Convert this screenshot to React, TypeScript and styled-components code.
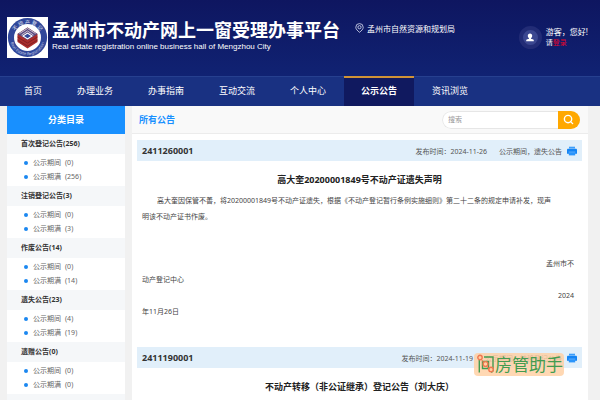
import React from "react";
import styled, { createGlobalStyle } from "styled-components";
import { Search } from "lucide-react";

const GlobalStyle = createGlobalStyle`
  *, *::before, *::after { box-sizing: border-box; }
  html, body { margin: 0; padding: 0; }
  body {
    background: #f1f1f1;
    color: #444;
    font-family: "Noto Sans", "Noto Sans CJK SC", sans-serif;
    font-size: 7px;
  }
  h1, h2, h3, p, ul { margin: 0; padding: 0; }
  ul { list-style: none; }
  a { color: inherit; text-decoration: none; }
  button, input { font-family: inherit; border: 0; padding: 0; }
`;

const Page = styled.div`
  display: flex;
  flex-direction: column;
  min-height: 100vh;
`;

const Header = styled.header`
  background: linear-gradient(#0e1660, #11277a);
  color: #fff;
`;

const Banner = styled.div`
  display: flex;
  height: 76px;
  padding: 17px 12px 0 7px;
`;

const Brand = styled.div`
  padding: 2px 0 0 4px;
`;

const BrandTitle = styled.h1`
  font-size: 18px;
  line-height: 22px;
  font-weight: 700;
  white-space: nowrap;
`;

const BrandSubtitle = styled.p`
  font-family: "Liberation Sans", sans-serif;
  font-size: 8px;
  line-height: 12px;
  white-space: nowrap;
`;

const Office = styled.div`
  display: flex;
  align-items: center;
  gap: 3px;
  height: 12px;
  margin: 5px 0 0 15px;
  font-size: 8px;
  white-space: nowrap;
`;

const Visitor = styled.div`
  display: flex;
  gap: 4px;
  margin: 9px 0 0 auto;
  white-space: nowrap;
`;

const Avatar = styled.span`
  display: grid;
  place-items: center;
  width: 23px;
  height: 23px;
  border: 4px solid #222c76;
  border-radius: 50%;
  background: #3b4790;
`;

const Greeting = styled.div`
  font-size: 8px;
  line-height: 11px;
`;

const LoginLine = styled.div`
  font-size: 7px;
  line-height: 12px;
`;

const LoginLink = styled.a`
  color: #e0062c;
`;

const Nav = styled.nav`
  display: flex;
  gap: 1px;
  height: 30px;
  padding-left: 7px;
  background: #193182;
  border-top: 1px solid #26408f;
`;

const NavLink = styled.a<{ $active?: boolean }>`
  margin-top: -1px;
  padding: 0 17px;
  border-top: 2px solid ${(p) => (p.$active ? "#d09336" : "transparent")};
  background: ${(p) => (p.$active ? "#10195f" : "transparent")};
  font-size: 9px;
  font-weight: ${(p) => (p.$active ? 700 : 400)};
  line-height: 26px;
  white-space: nowrap;
`;

const Body = styled.div`
  display: flex;
  flex: 1;
  gap: 7px;
  padding: 0 12px 0 7px;
`;

const Sidebar = styled.aside`
  display: flex;
  flex-direction: column;
  flex: 0 0 118px;
  background: #fff;
`;

const SidebarTitle = styled.h2`
  background: #1890ff;
  color: #fff;
  font-size: 9px;
  line-height: 28px;
  height: 28px;
  text-align: center;
`;

const GroupTitle = styled.h3`
  background: #f5f7f9;
  color: #333;
  padding-left: 14px;
  font-size: 7px;
  line-height: 20px;
`;

const GroupList = styled.ul`
  padding: 2px 0 2px 17px;
`;

const GroupItem = styled.li`
  display: flex;
  align-items: center;
  height: 14px;
  color: #666;

  &::before {
    content: "";
    width: 4px;
    height: 4px;
    margin-right: 5px;
    border-radius: 50%;
    background: #1b87f0;
  }
`;

const GroupLink = styled.a`
  display: flex;
  gap: 4px;
  line-height: 14px;
`;

const GroupRest = styled.div`
  flex: 1;
  background: #f5f7f9;
`;

const Main = styled.main`
  flex: 1;
  min-width: 0;
  background: #fff;
`;

const MainHead = styled.div`
  display: flex;
  align-items: center;
  justify-content: space-between;
  height: 28px;
  padding: 0 8px 0 7px;
  background: #f9f9f9;
  border-bottom: 1px solid #ececec;
`;

const MainTitle = styled.h2`
  color: #1890ff;
  font-size: 9px;
`;

const SearchBox = styled.form`
  display: flex;
  width: 138px;
  height: 18px;
  border-radius: 9px;
  overflow: hidden;
`;

const SearchInput = styled.input`
  flex: 1;
  min-width: 0;
  padding-left: 5px;
  border: 1px solid #e6e6e6;
  border-right: 0;
  border-radius: 9px 0 0 9px;
  background: #fff;
  font-size: 7px;
  &::placeholder { color: #999; }
`;

const SearchButton = styled.button`
  display: grid;
  place-items: center;
  width: 22px;
  padding-right: 2px;
  background: #ffa800;
  color: #fff;
`;

const Notices = styled.div`
  padding: 6px 6px 0 5px;
`;

const NoticeBar = styled.div`
  display: flex;
  align-items: center;
  height: 21px;
  padding: 0 5px;
  background: #e1effa;
  white-space: nowrap;
`;

const NoticeNumber = styled.strong`
  margin-right: auto;
  color: #333;
  font-size: 9px;
`;

const NoticeMeta = styled.span`
  margin-right: 12px;
  color: #555;
`;

const NoticeKind = styled.span`
  position: relative;
  margin-right: 5px;
  color: #555;
`;

const PrintButton = styled.button`
  display: grid;
  width: 10px;
  height: 10px;
  background: none;
`;

const NoticeTitle = styled.h3`
  margin-top: 10px;
  color: #222;
  font-size: 9px;
  line-height: 18px;
  text-align: center;
`;

const NoticeText = styled.div`
  padding: 4px 8px 27px 5px;
  line-height: 16px;
`;

const Paragraph = styled.p`
  margin-bottom: 31px;
  text-indent: 15px;
`;

const SignEnd = styled.p`
  text-align: right;
`;

const Stamp = styled.div`
  position: absolute;
  right: -2px;
  top: 0;
  display: flex;
  align-items: center;
  width: 90px;
  height: 23px;
  padding-left: 3px;
  border-radius: 4px;
  background: rgba(255, 208, 162, 0.82);
  color: #429c50;
  font-size: 17px;
  line-height: 23px;
`;

const Emblem = () => (
  <svg width="41" height="41" viewBox="0 0 41 41" role="img" aria-label="不动产登记">
    <defs>
      <path id="arcTop" d="M6.500 20.500a14 14 0 0 1 28 0" />
      <path id="arcBottom" d="M2.800 20.500a17.700 17.700 0 0 0 35.400 0" />
    </defs>
    <rect width="41" height="41" fill="#fff" />
    <circle cx="20.500" cy="20.500" r="19.600" fill="#30479a" />
    <circle cx="20.500" cy="20.500" r="13.500" fill="#fff" />
    <text fontSize="5" fill="#e4e8f4" textAnchor="middle">
      <textPath href="#arcTop" startOffset="50%">不 动 产 登 记</textPath>
    </text>
    <text fontSize="4" fill="#c3cbe4" textAnchor="middle">
      <textPath href="#arcBottom" startOffset="50%">Real Estate Registration</textPath>
    </text>
    <path d="M20.500 10.500L30.500 17v8l-10 6.500L10.500 25v-8z" fill="#a92d2b" />
    <path d="M20.500 10.500L30.500 17l-10 6-10-6z" fill="#5a4a80" />
    <path d="M12.500 16.500l8-5 8 5M14.500 18l6-4 6 4" fill="none" stroke="#e9dfe4" strokeWidth=".8" />
    <path d="M10.500 20l10 6 10-6M10.500 23l10 6 10-6" fill="none" stroke="#7a1c22" strokeWidth=".8" />
    <path d="M20.500 15.500l5.500 3.500-5.500 3.500L15 19z" fill="#fff" />
    <path d="M20.500 16.800L24 19l-3.500 2.200L17 19z" fill="#30479a" />
  </svg>
);

const PinIcon = () => (
  <svg width="9" height="10" viewBox="0 0 9 10" fill="none" stroke="#dfe3f5" strokeWidth=".8">
    <path d="M4.500 9.300C2.500 7.700.8 6.200.8 4.300a3.700 3.700 0 0 1 7.400 0c0 1.900-1.700 3.400-3.700 5z" />
    <circle cx="4.500" cy="4.200" r="1.600" />
  </svg>
);

const PersonIcon = () => (
  <svg width="8" height="9" viewBox="0 0 8 9" fill="#fff">
    <path d="M4 .5c1.300 0 2.200 1 2.200 2.200 0 1-.5 1.900-1.200 2.400v.6l2.300.9c.3.200.5.500.5 1v.6H.2v-.6c0-.5.2-.8.5-1L3 5.700v-.6c-.7-.5-1.200-1.400-1.200-2.400C1.800 1.500 2.700.5 4 .5z" />
  </svg>
);

const PrinterIcon = () => (
  <svg width="10" height="10" viewBox="0 0 10 10">
    <path d="M2 .7h6v1.800H2z" fill="#3b9dfb" />
    <path d="M1.200 2.700h7.600c.7 0 1.200.5 1.200 1.200v3.800H0V3.900c0-.7.500-1.200 1.200-1.200z" fill="#1284f5" />
    <path d="M1.800 6.300h6.400v3.100H1.800z" fill="#2b95fb" />
    <path d="M1.600 6h6.800" stroke="#8cc5fb" strokeWidth=".6" />
  </svg>
);

const StampIcon = () => (
  <svg width="18" height="20" viewBox="0 0 18 20" fill="none" strokeWidth="1.400">
    <path d="M2.300 6v12.500M7 3h9v13.300c0 1.200-.5 1.700-2 1.700" stroke="#429c50" />
    <path d="M5.500 7.500h6v7h-6zM5.500 11h6" stroke="#429c50" />
    <path d="M3.500 4.200l5 6.800 5 5.500" stroke="#f0774f" strokeWidth="1" />
    <g fill="#ffd0a2" stroke="#f0774f">
      <circle cx="3" cy="3.500" r="2.200" />
      <circle cx="8.500" cy="10" r="2.400" />
      <circle cx="14" cy="15.500" r="2.200" />
    </g>
  </svg>
);

const navItems = ["首页", "办理业务", "办事指南", "互动交流", "个人中心", "公示公告", "资讯浏览"];

const groups = [
  { name: "首次登记公告", total: 256, open: 0, closed: 256 },
  { name: "注销登记公告", total: 3, open: 0, closed: 3 },
  { name: "作废公告", total: 14, open: 0, closed: 14 },
  { name: "遗失公告", total: 23, open: 4, closed: 19 },
  { name: "遗赠公告", total: 0, open: 0, closed: 0 },
];

export default function App() {
  return (
    <>
      <GlobalStyle />
      <Page>
        <Header>
          <Banner>
            <Emblem />
            <Brand>
              <BrandTitle>孟州市不动产网上一窗受理办事平台</BrandTitle>
              <BrandSubtitle>Real estate registration online business hall of Mengzhou City</BrandSubtitle>
            </Brand>
            <Office>
              <PinIcon />
              孟州市自然资源和规划局
            </Office>
            <Visitor>
              <Avatar>
                <PersonIcon />
              </Avatar>
              <div>
                <Greeting>游客，您好!</Greeting>
                <LoginLine>
                  请<LoginLink href="#login">登录</LoginLink>
                </LoginLine>
              </div>
            </Visitor>
          </Banner>
          <Nav>
            {navItems.map((item) => (
              <NavLink key={item} href="#" $active={item === "公示公告"}>
                {item}
              </NavLink>
            ))}
          </Nav>
        </Header>
        <Body>
          <Sidebar>
            <SidebarTitle>分类目录</SidebarTitle>
            {groups.map((g) => (
              <section key={g.name}>
                <GroupTitle>
                  {g.name}({g.total})
                </GroupTitle>
                <GroupList>
                  <GroupItem>
                    <GroupLink href="#">
                      公示期间<span>({g.open})</span>
                    </GroupLink>
                  </GroupItem>
                  <GroupItem>
                    <GroupLink href="#">
                      公示期满<span>({g.closed})</span>
                    </GroupLink>
                  </GroupItem>
                </GroupList>
              </section>
            ))}
            <GroupRest />
          </Sidebar>
          <Main>
            <MainHead>
              <MainTitle>所有公告</MainTitle>
              <SearchBox role="search" onSubmit={(e) => e.preventDefault()}>
                <SearchInput type="text" placeholder="搜索" aria-label="搜索" />
                <SearchButton type="submit" aria-label="搜索">
                  <Search size={11} strokeWidth={3} />
                </SearchButton>
              </SearchBox>
            </MainHead>
            <Notices>
              <article>
                <NoticeBar>
                  <NoticeNumber>2411260001</NoticeNumber>
                  <NoticeMeta>发布时间：2024-11-26</NoticeMeta>
                  <NoticeKind>公示期间，遗失公告</NoticeKind>
                  <PrintButton type="button" aria-label="打印">
                    <PrinterIcon />
                  </PrintButton>
                </NoticeBar>
                <NoticeTitle>高大奎20200001849号不动产证遗失声明</NoticeTitle>
                <NoticeText>
                  <Paragraph>
                    高大奎因保管不善，将20200001849号不动产证遗失，根据《不动产登记暂行条例实施细则》第二十二条的规定申请补发，现声
                    <br />
                    明该不动产证书作废。
                  </Paragraph>
                  <SignEnd>孟州市不</SignEnd>
                  <p>动产登记中心</p>
                  <SignEnd>2024</SignEnd>
                  <p>年11月26日</p>
                </NoticeText>
              </article>
              <article>
                <NoticeBar>
                  <NoticeNumber>2411190001</NoticeNumber>
                  <NoticeMeta>发布时间：2024-11-19</NoticeMeta>
                  <NoticeKind>
                    公示期间，转移登记公告
                    <Stamp>
                      <StampIcon />
                      房管助手
                    </Stamp>
                  </NoticeKind>
                  <PrintButton type="button" aria-label="打印">
                    <PrinterIcon />
                  </PrintButton>
                </NoticeBar>
                <NoticeTitle>不动产转移（非公证继承）登记公告（刘大庆）</NoticeTitle>
              </article>
            </Notices>
          </Main>
        </Body>
      </Page>
    </>
  );
}
